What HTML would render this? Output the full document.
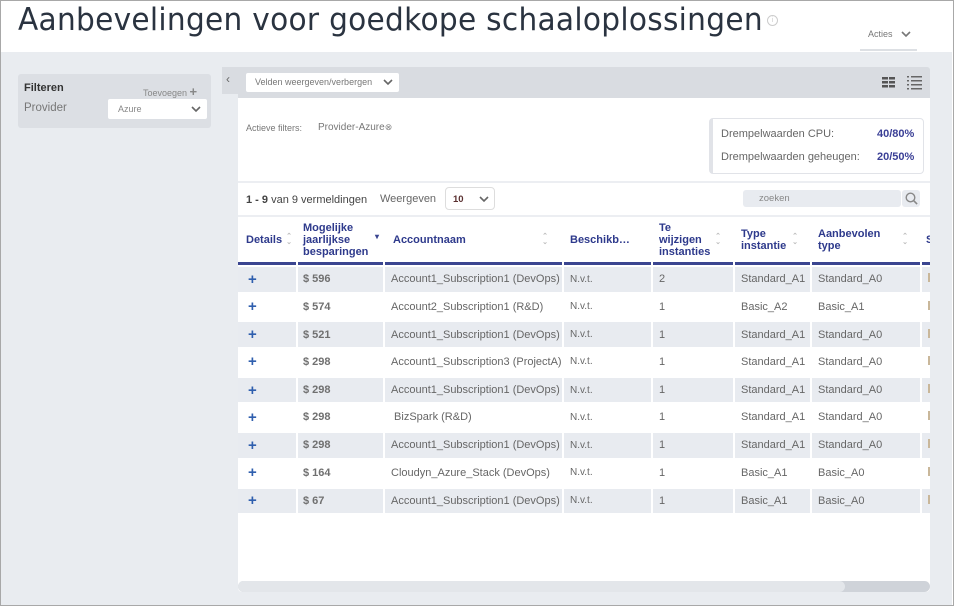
<!DOCTYPE html>
<html><head><meta charset="utf-8"><style>
*{box-sizing:border-box;margin:0;padding:0}
body{width:956px;height:607px;overflow:hidden;background:#fff;font-family:"Liberation Sans",sans-serif;position:relative}
.frame{position:absolute;left:0;top:0;width:954px;height:606px;border:1px solid #a8a8a8}
.a{position:absolute}
h1{position:absolute;left:18px;top:2px;font-family:"DejaVu Sans","Liberation Sans",sans-serif;font-weight:normal;font-size:31px;color:#2a3340;letter-spacing:0.3px;transform:scaleX(0.955);transform-origin:left}
.gray{position:absolute;left:1px;top:52px;width:951px;height:553px;background:#e9ecf0}
.t{font-size:11px;color:#666;white-space:nowrap}
table{border-collapse:separate;border-spacing:2px 0;position:absolute;font-size:11px;table-layout:fixed;width:728px}
th{color:#2e3a8c;font-weight:bold;text-align:left;vertical-align:middle;height:48px;border-bottom:3px solid #3a4590;padding:0 4px;line-height:12px;position:relative;white-space:nowrap;overflow:visible}
td{height:27.7px;padding:0 6px;color:#666;white-space:nowrap;overflow:hidden;vertical-align:middle}
tr.g td{background:#e8ebf0;border-top:2px solid #fff;border-bottom:1px solid #fff}
td.p{color:#2f5fae;font-weight:bold;font-size:15px;padding-left:10px}
td.m{font-weight:bold;color:#707070;padding-left:5px}
td.n{font-size:10px}
.s{position:absolute;right:4px;top:50%;margin-top:-6px;font-size:7px;color:#bbb;line-height:6px}
.sq{display:inline-block;width:3px;height:9px;background:#c9b79a}
</style></head><body>
<div class="gray"></div>
<div class="frame"></div>
<h1>Aanbevelingen voor goedkope schaaloplossingen</h1>
<div class="a" style="left:767px;top:15px;width:11px;height:11px;border:1px solid #ccc;border-radius:50%;font-size:7px;color:#ccc;text-align:center;line-height:9px">i</div>
<div class="a" style="left:860px;top:24px;width:57px;height:27px;border-bottom:2px solid #dde0e4;background:#fff"></div>
<div class="a t" style="left:868px;top:29px;font-size:9px;color:#777">Acties</div>
<svg class="a" style="left:901px;top:31px" width="10" height="7"><path d="M1 1l4 4 4-4" stroke="#777" stroke-width="1.6" fill="none"/></svg>

<div class="a" style="left:18px;top:74px;width:193px;height:54px;background:#dcdfe4;border-radius:3px"></div>
<div class="a" style="left:24px;top:82px;font-size:11px;font-weight:bold;color:#333">Filteren</div>
<div class="a t" style="left:143px;top:84px;font-size:9px;color:#888">Toevoegen <b style="font-size:13px;color:#888">+</b></div>
<div class="a t" style="left:24px;top:102px;font-size:11.5px;color:#777">Provider</div>
<div class="a" style="left:108px;top:99px;width:99px;height:20px;background:#fff;border-radius:2px"></div>
<div class="a t" style="left:118px;top:104px;font-size:9px;color:#888">Azure</div>
<svg class="a" style="left:191px;top:106px" width="10" height="7"><path d="M1 1l4 4 4-4" stroke="#666" stroke-width="1.6" fill="none"/></svg>

<div class="a" style="left:222px;top:67px;width:17px;height:27px;background:#d9dce1"></div>
<div class="a" style="left:226px;top:72px;font-size:12px;color:#666">‹</div>
<div class="a" style="left:238px;top:67px;width:692px;height:31px;background:#d9dce1;border-radius:0 3px 0 0"></div>
<div class="a" style="left:246px;top:73px;width:153px;height:19px;background:#fff;border-radius:2px"></div>
<div class="a t" style="left:255px;top:77px;font-size:9px;color:#777">Velden weergeven/verbergen</div>
<svg class="a" style="left:383px;top:79px" width="10" height="7"><path d="M1 1l4 4 4-4" stroke="#666" stroke-width="1.6" fill="none"/></svg>
<svg class="a" style="left:882px;top:77px" width="14" height="12"><g fill="#555"><rect x="0" y="0" width="6" height="2.5"/><rect x="7" y="0" width="6" height="2.5"/><rect x="0" y="4" width="6" height="2.5"/><rect x="7" y="4" width="6" height="2.5"/><rect x="0" y="8" width="6" height="2.5"/><rect x="7" y="8" width="6" height="2.5"/></g></svg>
<svg class="a" style="left:907px;top:76px" width="15" height="14"><g fill="#666"><rect x="0" y="0" width="2" height="1.5"/><rect x="4" y="0" width="11" height="1.5"/><rect x="0" y="4" width="2" height="1.5"/><rect x="4" y="4" width="11" height="1.5"/><rect x="0" y="8" width="2" height="1.5"/><rect x="4" y="8" width="11" height="1.5"/><rect x="0" y="12" width="2" height="1.5"/><rect x="4" y="12" width="11" height="1.5"/></g></svg>

<div class="a" style="left:238px;top:98px;width:692px;height:494px;background:#fff;border-radius:0 0 4px 4px"></div>
<div class="a t" style="left:246px;top:123px;font-size:9px;color:#777">Actieve filters:</div>
<div class="a t" style="left:318px;top:122px;font-size:10px;color:#777">Provider-Azure<span style="font-size:9px;color:#888">⊗</span></div>
<div class="a" style="left:709px;top:118px;width:215px;height:56px;border:1px solid #e1e3e8;border-left:4px solid #e1e3e8;border-radius:4px"></div>
<div class="a t" style="left:721px;top:128px;font-size:11px;color:#666">Drempelwaarden CPU:</div>
<div class="a t" style="left:877px;top:128px;font-size:11px;color:#3a3f96;font-weight:bold">40/80%</div>
<div class="a t" style="left:721px;top:151px;font-size:11px;color:#666">Drempelwaarden geheugen:</div>
<div class="a t" style="left:877px;top:151px;font-size:11px;color:#3a3f96;font-weight:bold">20/50%</div>
<div class="a" style="left:238px;top:181px;width:692px;height:2px;background:#eceef2"></div>
<div class="a t" style="left:246px;top:194px;font-size:11px;color:#444"><b>1 - 9</b> van 9 vermeldingen</div>
<div class="a t" style="left:380px;top:193px;font-size:11px;color:#666">Weergeven</div>
<div class="a" style="left:445px;top:187px;width:50px;height:23px;border:1px solid #ddd;border-radius:4px"></div>
<div class="a t" style="left:453px;top:194px;font-size:9.5px;color:#5a3030;font-weight:bold">10</div>
<svg class="a" style="left:479px;top:196px" width="10" height="7"><path d="M1 1l4 4 4-4" stroke="#666" stroke-width="1.6" fill="none"/></svg>
<div class="a" style="left:743px;top:190px;width:158px;height:17px;background:#e8ebf0;border-radius:3px"></div>
<div class="a" style="left:902px;top:190px;width:18px;height:17px;background:#e8ebf0;border-radius:3px"></div>
<div class="a t" style="left:759px;top:193px;font-size:9.5px;color:#888">zoeken</div>
<svg class="a" style="left:905px;top:192px" width="13" height="13"><circle cx="5.5" cy="5.5" r="4.3" stroke="#888" stroke-width="1.4" fill="none"/><path d="M8.6 8.6l3.5 3.5" stroke="#888" stroke-width="1.6"/></svg>
<div class="a" style="left:238px;top:215px;width:692px;height:2px;background:#eceef2"></div>

<div class="a" style="left:236px;top:217px;width:694px;height:360px;overflow:hidden">
<table style="left:0;top:0">
<colgroup><col style="width:58px"><col style="width:85px"><col style="width:177px"><col style="width:87px"><col style="width:80px"><col style="width:75px"><col style="width:108px"><col style="width:40px"></colgroup>
<tr><th style="padding-left:8px">Details<span class="s">⌃<br>⌄</span></th><th style="padding-left:5px">Mogelijke<br>jaarlijkse<br>besparingen<span class="s" style="color:#3a4590;font-size:8px;right:4px">▾</span></th><th style="padding-left:8px">Accountnaam<span class="s" style="right:14px">⌃<br>⌄</span></th><th style="padding-left:6px">Beschikb…</th><th style="padding-left:6px">Te<br>wijzigen<br>instanties<span class="s" style="right:12px">⌃<br>⌄</span></th><th style="padding-left:6px">Type<br>instantie<span class="s" style="right:12px">⌃<br>⌄</span></th><th style="padding-left:6px">Aanbevolen<br>type<span class="s" style="right:12px">⌃<br>⌄</span></th><th>S</th></tr>
<tr class="g"><td class="p">+</td><td class="m">$ 596</td><td>Account1_Subscription1 (DevOps)</td><td class="n">N.v.t.</td><td>2</td><td>Standard_A1</td><td>Standard_A0</td><td><span class="sq"></span></td></tr>
<tr><td class="p">+</td><td class="m">$ 574</td><td>Account2_Subscription1 (R&amp;D)</td><td class="n">N.v.t.</td><td>1</td><td>Basic_A2</td><td>Basic_A1</td><td><span class="sq"></span></td></tr>
<tr class="g"><td class="p">+</td><td class="m">$ 521</td><td>Account1_Subscription1 (DevOps)</td><td class="n">N.v.t.</td><td>1</td><td>Standard_A1</td><td>Standard_A0</td><td><span class="sq"></span></td></tr>
<tr><td class="p">+</td><td class="m">$ 298</td><td>Account1_Subscription3 (ProjectA)</td><td class="n">N.v.t.</td><td>1</td><td>Standard_A1</td><td>Standard_A0</td><td><span class="sq"></span></td></tr>
<tr class="g"><td class="p">+</td><td class="m">$ 298</td><td>Account1_Subscription1 (DevOps)</td><td class="n">N.v.t.</td><td>1</td><td>Standard_A1</td><td>Standard_A0</td><td><span class="sq"></span></td></tr>
<tr><td class="p">+</td><td class="m">$ 298</td><td>&nbsp;BizSpark (R&amp;D)</td><td class="n">N.v.t.</td><td>1</td><td>Standard_A1</td><td>Standard_A0</td><td><span class="sq"></span></td></tr>
<tr class="g"><td class="p">+</td><td class="m">$ 298</td><td>Account1_Subscription1 (DevOps)</td><td class="n">N.v.t.</td><td>1</td><td>Standard_A1</td><td>Standard_A0</td><td><span class="sq"></span></td></tr>
<tr><td class="p">+</td><td class="m">$ 164</td><td>Cloudyn_Azure_Stack (DevOps)</td><td class="n">N.v.t.</td><td>1</td><td>Basic_A1</td><td>Basic_A0</td><td><span class="sq"></span></td></tr>
<tr class="g"><td class="p">+</td><td class="m">$ 67</td><td>Account1_Subscription1 (DevOps)</td><td class="n">N.v.t.</td><td>1</td><td>Basic_A1</td><td>Basic_A0</td><td><span class="sq"></span></td></tr>
</table>
</div>
<div class="a" style="left:238px;top:581px;width:692px;height:11px;background:#cfd3d9;border-radius:6px"></div>
<div class="a" style="left:238px;top:581px;width:607px;height:11px;background:#e3e6ea;border-radius:6px"></div>
</body></html>
